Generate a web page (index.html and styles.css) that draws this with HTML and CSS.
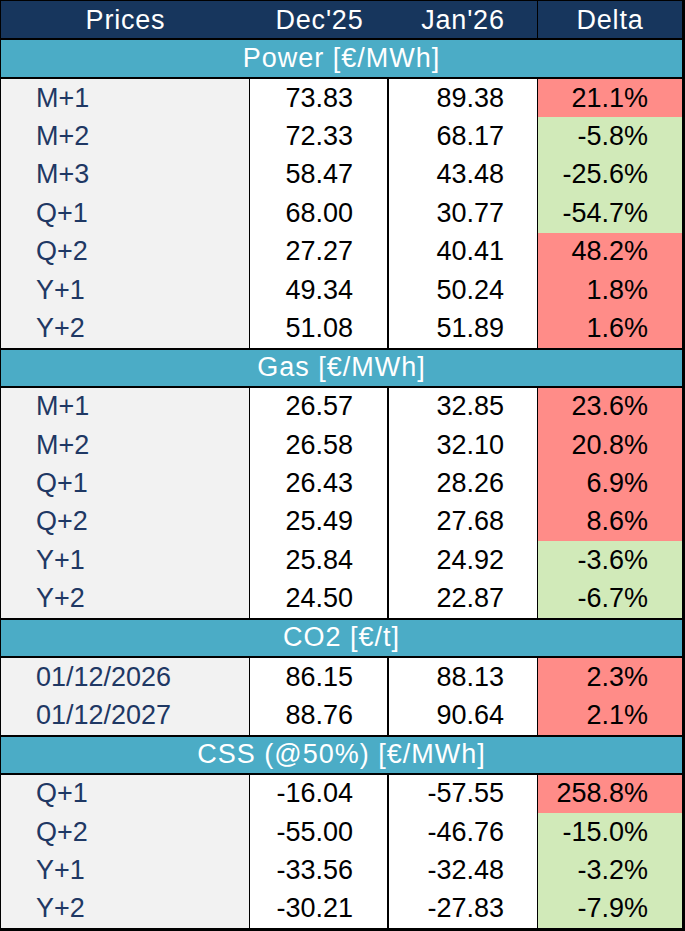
FILE: index.html
```html
<!DOCTYPE html>
<html>
<head>
<meta charset="utf-8">
<link rel="stylesheet" href="styles.css">
</head>
<body>
<div class="sheet">
  <div class="row head">
    <div class="c c1">Prices</div>
    <div class="c c2">Dec'25</div>
    <div class="c c3">Jan'26</div>
    <div class="c c4">Delta</div>
  </div>
  <div class="sec first">Power [€/MWh]</div>
  <div class="row data"><div class="c c1">M+1</div><div class="c c2">73.83</div><div class="c c3">89.38</div><div class="c c4 up">21.1%</div></div>
  <div class="row data"><div class="c c1">M+2</div><div class="c c2">72.33</div><div class="c c3">68.17</div><div class="c c4 down">-5.8%</div></div>
  <div class="row data"><div class="c c1">M+3</div><div class="c c2">58.47</div><div class="c c3">43.48</div><div class="c c4 down">-25.6%</div></div>
  <div class="row data"><div class="c c1">Q+1</div><div class="c c2">68.00</div><div class="c c3">30.77</div><div class="c c4 down">-54.7%</div></div>
  <div class="row data"><div class="c c1">Q+2</div><div class="c c2">27.27</div><div class="c c3">40.41</div><div class="c c4 up">48.2%</div></div>
  <div class="row data"><div class="c c1">Y+1</div><div class="c c2">49.34</div><div class="c c3">50.24</div><div class="c c4 up">1.8%</div></div>
  <div class="row data"><div class="c c1">Y+2</div><div class="c c2">51.08</div><div class="c c3">51.89</div><div class="c c4 up">1.6%</div></div>
  <div class="sec">Gas [€/MWh]</div>
  <div class="row data"><div class="c c1">M+1</div><div class="c c2">26.57</div><div class="c c3">32.85</div><div class="c c4 up">23.6%</div></div>
  <div class="row data"><div class="c c1">M+2</div><div class="c c2">26.58</div><div class="c c3">32.10</div><div class="c c4 up">20.8%</div></div>
  <div class="row data"><div class="c c1">Q+1</div><div class="c c2">26.43</div><div class="c c3">28.26</div><div class="c c4 up">6.9%</div></div>
  <div class="row data"><div class="c c1">Q+2</div><div class="c c2">25.49</div><div class="c c3">27.68</div><div class="c c4 up">8.6%</div></div>
  <div class="row data"><div class="c c1">Y+1</div><div class="c c2">25.84</div><div class="c c3">24.92</div><div class="c c4 down">-3.6%</div></div>
  <div class="row data"><div class="c c1">Y+2</div><div class="c c2">24.50</div><div class="c c3">22.87</div><div class="c c4 down">-6.7%</div></div>
  <div class="sec">CO2 [€/t]</div>
  <div class="row data"><div class="c c1">01/12/2026</div><div class="c c2">86.15</div><div class="c c3">88.13</div><div class="c c4 up">2.3%</div></div>
  <div class="row data"><div class="c c1">01/12/2027</div><div class="c c2">88.76</div><div class="c c3">90.64</div><div class="c c4 up">2.1%</div></div>
  <div class="sec">CSS (@50%) [€/MWh]</div>
  <div class="row data"><div class="c c1">Q+1</div><div class="c c2">-16.04</div><div class="c c3">-57.55</div><div class="c c4 up">258.8%</div></div>
  <div class="row data"><div class="c c1">Q+2</div><div class="c c2">-55.00</div><div class="c c3">-46.76</div><div class="c c4 down">-15.0%</div></div>
  <div class="row data"><div class="c c1">Y+1</div><div class="c c2">-33.56</div><div class="c c3">-32.48</div><div class="c c4 down">-3.2%</div></div>
  <div class="row data"><div class="c c1">Y+2</div><div class="c c2">-30.21</div><div class="c c3">-27.83</div><div class="c c4 down">-7.9%</div></div>
</div>
</body>
</html>
```
FILE: styles.css
```css
html, body {
  margin: 0;
  padding: 0;
  background: #ffffff;
}

.sheet {
  width: 685px;
  height: 931px;
  box-sizing: border-box;
  border-top: 1px solid #000;
  border-left: 1px solid #000;
  border-right: 3px solid #000;
  border-bottom: 3px solid #000;
  font-family: "Liberation Sans", Arial, sans-serif;
  font-size: 27px;
  color: #000;
  display: flex;
  flex-direction: column;
}

.row {
  display: grid;
  grid-template-columns: 249px 139px 149px 1fr;
}

.c {
  display: flex;
  align-items: center;
  box-sizing: border-box;
  white-space: nowrap;
}

.head {
  height: 39px;
  background: #17365d;
  color: #fff;
  border-bottom: 2px solid #000;
  box-sizing: border-box;
  flex: none;
}

.head .c {
  justify-content: center;
  font-size: 27px;
  letter-spacing: 0.8px;
  padding-top: 1px;
}

.head .c3 {
  border-right: 1px solid #000;
}

.sec {
  height: 40px;
  box-sizing: border-box;
  border-top: 2px solid #000;
  border-bottom: 2px solid #000;
  background: #4bacc6;
  color: #fff;
  display: flex;
  align-items: center;
  justify-content: center;
  font-size: 27px;
  letter-spacing: 1px;
  flex: none;
}

.sec.first {
  border-top: none;
  height: 39px;
}

.data {
  flex: 1 1 0;
  min-height: 0;
}

.data .c1 {
  background: #f2f2f2;
  color: #1f3864;
  padding-left: 35px;
  border-right: 1px solid #000;
}

.data .c2 {
  justify-content: flex-end;
  padding-right: 34px;
  border-right: 2px solid #000;
}

.data .c3 {
  justify-content: flex-end;
  padding-right: 33px;
  border-right: 1px solid #000;
}

.data .c4 {
  justify-content: flex-end;
  padding-right: 34px;
}

.up {
  background: #ff8c88;
}

.down {
  background: #d1eab9;
}
```
